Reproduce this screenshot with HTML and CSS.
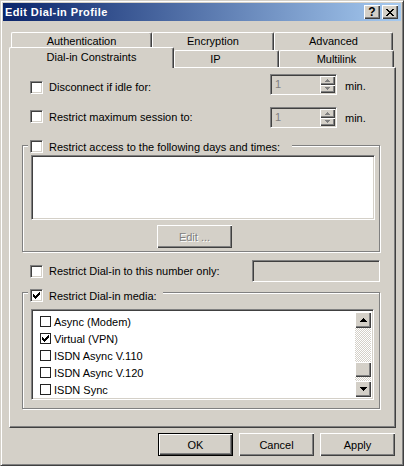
FILE: index.html
```html
<!DOCTYPE html>
<html>
<head>
<meta charset="utf-8">
<link rel="stylesheet" href="styles.css">
</head>
<body>
<div class="window">
  <div class="titlebar">
    <span class="title">Edit Dial-in Profile</span>
    <div class="tbtns">
      <span class="tbtn help">?</span>
      <span class="tbtn"><svg width="8" height="7" viewBox="0 0 8 7" shape-rendering="crispEdges"><path d="M0 0h2v1H0zM1 1h2v1H1zM2 2h4v1H2zM3 3h2v1H3zM2 4h4v1H2zM1 5h2v1H1zM0 6h2v1H0zM6 0h2v1H6zM5 1h2v1H5zM5 5h2v1H5zM6 6h2v1H6z" fill="#000"/></svg></span>
    </div>
  </div>
  <div class="client">
    <div class="tabs">
      <div class="tabrow back">
        <div class="tab t-auth">Authentication</div>
        <div class="tab t-enc">Encryption</div>
        <div class="tab t-adv">Advanced</div>
      </div>
      <div class="tabrow front">
        <div class="tab sel t-dial">Dial-in Constraints</div>
        <div class="tab t-ip">IP</div>
        <div class="tab t-multi">Multilink</div>
      </div>
    </div>
    <div class="panel">
      <div class="row r1">
        <span class="cb"></span><span class="lbl">Disconnect if idle for:</span>
        <div class="spin"><span class="val">1</span><div class="spinbtns"><span class="sb"><svg width="5" height="3" viewBox="0 0 5 3" shape-rendering="crispEdges"><path d="M2 0h1v1h1v1h1v1H0V2h1V1h1z" fill="#808080"/></svg></span><span class="sb"><svg width="5" height="3" viewBox="0 0 5 3" shape-rendering="crispEdges"><path d="M0 0h5v1H4v1H3v1H2V2H1V1H0z" fill="#808080"/></svg></span></div></div>
        <span class="unit">min.</span>
      </div>
      <div class="row r2">
        <span class="cb"></span><span class="lbl">Restrict maximum session to:</span>
        <div class="spin"><span class="val">1</span><div class="spinbtns"><span class="sb"><svg width="5" height="3" viewBox="0 0 5 3" shape-rendering="crispEdges"><path d="M2 0h1v1h1v1h1v1H0V2h1V1h1z" fill="#808080"/></svg></span><span class="sb"><svg width="5" height="3" viewBox="0 0 5 3" shape-rendering="crispEdges"><path d="M0 0h5v1H4v1H3v1H2V2H1V1H0z" fill="#808080"/></svg></span></div></div>
        <span class="unit">min.</span>
      </div>
      <div class="group g1">
        <div class="ghead g1h"><span class="cb"></span><span class="lbl">Restrict access to the following days and times:</span></div>
        <div class="sunken lb1"></div>
        <div class="btn edit">Edit ...</div>
      </div>
      <div class="row r3">
        <span class="cb"></span><span class="lbl">Restrict Dial-in to this number only:</span>
        <div class="sunken textbox"></div>
      </div>
      <div class="group g2">
        <div class="ghead g2h"><span class="cb"><svg width="7" height="7" viewBox="0 0 7 7" shape-rendering="crispEdges"><path d="M0 2h1v3H0zM1 3h1v3H1zM2 4h1v3H2zM3 3h1v3H3zM4 2h1v3H4zM5 1h1v3H5zM6 0h1v3H6z" fill="#000"/></svg></span><span class="lbl">Restrict Dial-in media:</span></div>
        <div class="sunken lb2">
          <div class="items">
            <div class="item"><span class="icb"></span>Async (Modem)</div>
            <div class="item"><span class="icb"><svg width="7" height="7" viewBox="0 0 7 7" shape-rendering="crispEdges"><path d="M0 2h1v3H0zM1 3h1v3H1zM2 4h1v3H2zM3 3h1v3H3zM4 2h1v3H4zM5 1h1v3H5zM6 0h1v3H6z" fill="#000"/></svg></span>Virtual (VPN)</div>
            <div class="item"><span class="icb"></span>ISDN Async V.110</div>
            <div class="item"><span class="icb"></span>ISDN Async V.120</div>
            <div class="item"><span class="icb"></span>ISDN Sync</div>
          </div>
          <div class="vscroll">
            <div class="raised sbtn"><svg width="7" height="4" viewBox="0 0 7 4" shape-rendering="crispEdges"><path d="M3 0h1v1h1v1h1v1h1v1H0V3h1V2h1V1h1z" fill="#000"/></svg></div>
            <div class="track t1"></div>
            <div class="raised thumb"></div>
            <div class="track t2"></div>
            <div class="raised sbtn"><svg width="7" height="4" viewBox="0 0 7 4" shape-rendering="crispEdges"><path d="M0 0h7v1H6v1H5v1H4v1H3V3H2V2H1V1H0z" fill="#000"/></svg></div>
          </div>
        </div>
      </div>
    </div>
    <div class="buttons">
      <div class="btn def">OK</div>
      <div class="btn">Cancel</div>
      <div class="btn">Apply</div>
    </div>
  </div>
</div>
</body>
</html>
```
FILE: styles.css
```css
* { box-sizing: border-box; }
body {
  margin: 0;
  background: #d4d0c8;
  font: 11px "Liberation Sans", Arial, sans-serif;
  color: #000;
}
.window {
  width: 404px;
  height: 466px;
  background: #d4d0c8;
  border: 1px solid;
  border-color: #d4d0c8 #404040 #404040 #d4d0c8;
  box-shadow: inset 1px 1px #fff, inset -1px -1px #808080;
  padding: 2px;
  display: flex;
  flex-direction: column;
}
.titlebar {
  height: 18px;
  flex: none;
  background: linear-gradient(to right, #0a246a, #a6caf0);
  display: flex;
  align-items: center;
  justify-content: space-between;
  padding: 0 3px 0 2px;
}
.title {
  color: #fff;
  font-weight: bold;
  letter-spacing: 0.4px;
}
.tbtns { display: flex; gap: 2px; }
.tbtn {
  width: 16px;
  height: 14px;
  background: #d4d0c8;
  box-shadow: inset 1px 1px #fff, inset -1px -1px #404040, inset -2px -2px #808080;
  display: flex;
  align-items: center;
  justify-content: center;
  font-weight: bold;
  font-size: 12px;
  line-height: 14px;
}
.client {
  flex: 1;
  padding: 11px 5px 0 6px;
  display: flex;
  flex-direction: column;
}
.tabs { display: flex; flex-direction: column; }
.tabrow { display: flex; }
.tabrow.back { height: 18px; padding-left: 2px; }
.tabrow.front { height: 17px; align-items: flex-end; }
.tab {
  height: 100%;
  background: #d4d0c8;
  border-top: 1px solid #fff;
  border-left: 1px solid #fff;
  border-right: 1px solid #404040;
  border-radius: 2px 2px 0 0;
  box-shadow: inset -1px 0 #808080;
  display: flex;
  justify-content: center;
  padding-top: 2px;
  line-height: 13px;
}
.t-auth { width: 141px; }
.t-enc { width: 122px; }
.t-adv { width: 119px; }
.t-dial { width: 165px; }
.t-ip { width: 105px; padding-right: 22px; }
.t-multi { width: 115px; }
.tab.sel {
  height: 21px;
  margin-bottom: -1px;
  position: relative;
  z-index: 1;
  padding-top: 3px;
}
.panel {
  width: 387px;
  height: 361px;
  flex: none;
  border: 1px solid;
  border-color: #fff #404040 #404040 #fff;
  box-shadow: inset -1px -1px #808080;
  padding: 0 15px 0 12px;
}
.row {
  display: flex;
  align-items: center;
  padding-left: 8px;
}
.r1 { margin-top: 6px; height: 21px; }
.r1 .cb, .r1 .lbl { margin-top: 5px; }
.r2 { margin-top: 12px; height: 21px; }
.r2 .cb, .r2 .lbl { margin-top: -2px; }
.r3 { margin-top: 8px; height: 22px; }
.cb {
  width: 13px;
  height: 13px;
  flex: none;
  background: #fff;
  border: 1px solid;
  border-color: #808080 #fff #fff #808080;
  box-shadow: inset 1px 1px #404040, inset -1px -1px #d4d0c8;
  display: flex;
  align-items: center;
  justify-content: center;
}
.cb svg { display: block; }
.lbl { margin-left: 6px; white-space: nowrap; }
.r1 .lbl, .r2 .lbl { width: 221px; }
.sunken {
  border: 1px solid;
  border-color: #808080 #fff #fff #808080;
  box-shadow: inset 1px 1px #404040, inset -1px -1px #d4d0c8;
}
.spin {
  width: 67px;
  height: 21px;
  border: 1px solid;
  border-color: #808080 #fff #fff #808080;
  box-shadow: inset 1px 1px #404040, inset -1px -1px #d4d0c8;
  display: flex;
  justify-content: space-between;
  padding: 1px 1px 1px 4px;
}
.val { color: #808080; line-height: 17px; }
.spinbtns { width: 15px; display: flex; flex-direction: column; }
.sb {
  flex: 1;
  background: #d4d0c8;
  box-shadow: inset 1px 1px #fff, inset -1px -1px #404040, inset -2px -2px #808080;
  display: flex;
  align-items: center;
  justify-content: center;
}
.sb svg { display: block; }
.unit { margin-left: 8px; }
.r1 .unit { margin-top: 2px; }
.group {
  border: 1px solid #808080;
  box-shadow: inset 1px 1px #fff, 1px 1px #fff;
}
.g1 { margin-top: 17px; padding: 0 4px 3px 8px; }
.g2 { margin-top: 10px; padding: 0 5px 8px 8px; }
.ghead {
  display: flex;
  align-items: center;
  width: fit-content;
  height: 13px;
  margin: -6px 0 0 -3px;
  padding: 0 6px 0 2px;
  background: #d4d0c8;
}
.g1h { padding-right: 12px; }
.g2h { margin-top: -4px; }
.lb1 {
  margin-top: 2px;
  height: 65px;
  background: #fff;
}
.btn {
  width: 75px;
  height: 23px;
  background: #d4d0c8;
  box-shadow: inset 1px 1px #fff, inset -1px -1px #404040, inset -2px -2px #808080;
  display: flex;
  align-items: center;
  justify-content: center;
}
.btn.edit {
  margin: 5px 0 0 126px;
  color: #808080;
  text-shadow: 1px 1px #fff;
}
.btn.def {
  border: 1px solid #000;
  box-shadow: inset 1px 1px #fff, inset -1px -1px #404040, inset -2px -2px #808080;
}
.textbox {
  margin-left: auto;
  width: 128px;
  height: 22px;
  background: #d4d0c8;
}
.lb2 {
  margin-top: 7px;
  height: 91px;
  background: #fff;
  display: flex;
  padding: 2px;
}
.items { flex: 1; padding-top: 1px; }
.item {
  height: 17px;
  display: flex;
  align-items: center;
  white-space: nowrap;
}
.icb {
  width: 11px;
  height: 11px;
  flex: none;
  border: 1px solid #222;
  background: #fff;
  margin: 0 3px 0 6px;
  display: flex;
  align-items: center;
  justify-content: center;
}
.icb svg { display: block; }
.vscroll {
  width: 16px;
  display: flex;
  flex-direction: column;
}
.raised {
  background: #d4d0c8;
  box-shadow: inset 1px 1px #fff, inset -1px -1px #404040, inset -2px -2px #808080;
}
.sbtn {
  height: 16px;
  display: flex;
  align-items: center;
  justify-content: center;
}
.sbtn svg { display: block; }
.track {
  background: repeating-conic-gradient(#fff 0 25%, #d4d0c8 0 50%) 0 0 / 2px 2px;
}
.t1 { height: 35px; }
.t2 { height: 4px; }
.thumb { height: 16px; }
.buttons {
  margin-top: 5px;
  display: flex;
  justify-content: flex-end;
  gap: 6px;
  padding-right: 1px;
}
```
